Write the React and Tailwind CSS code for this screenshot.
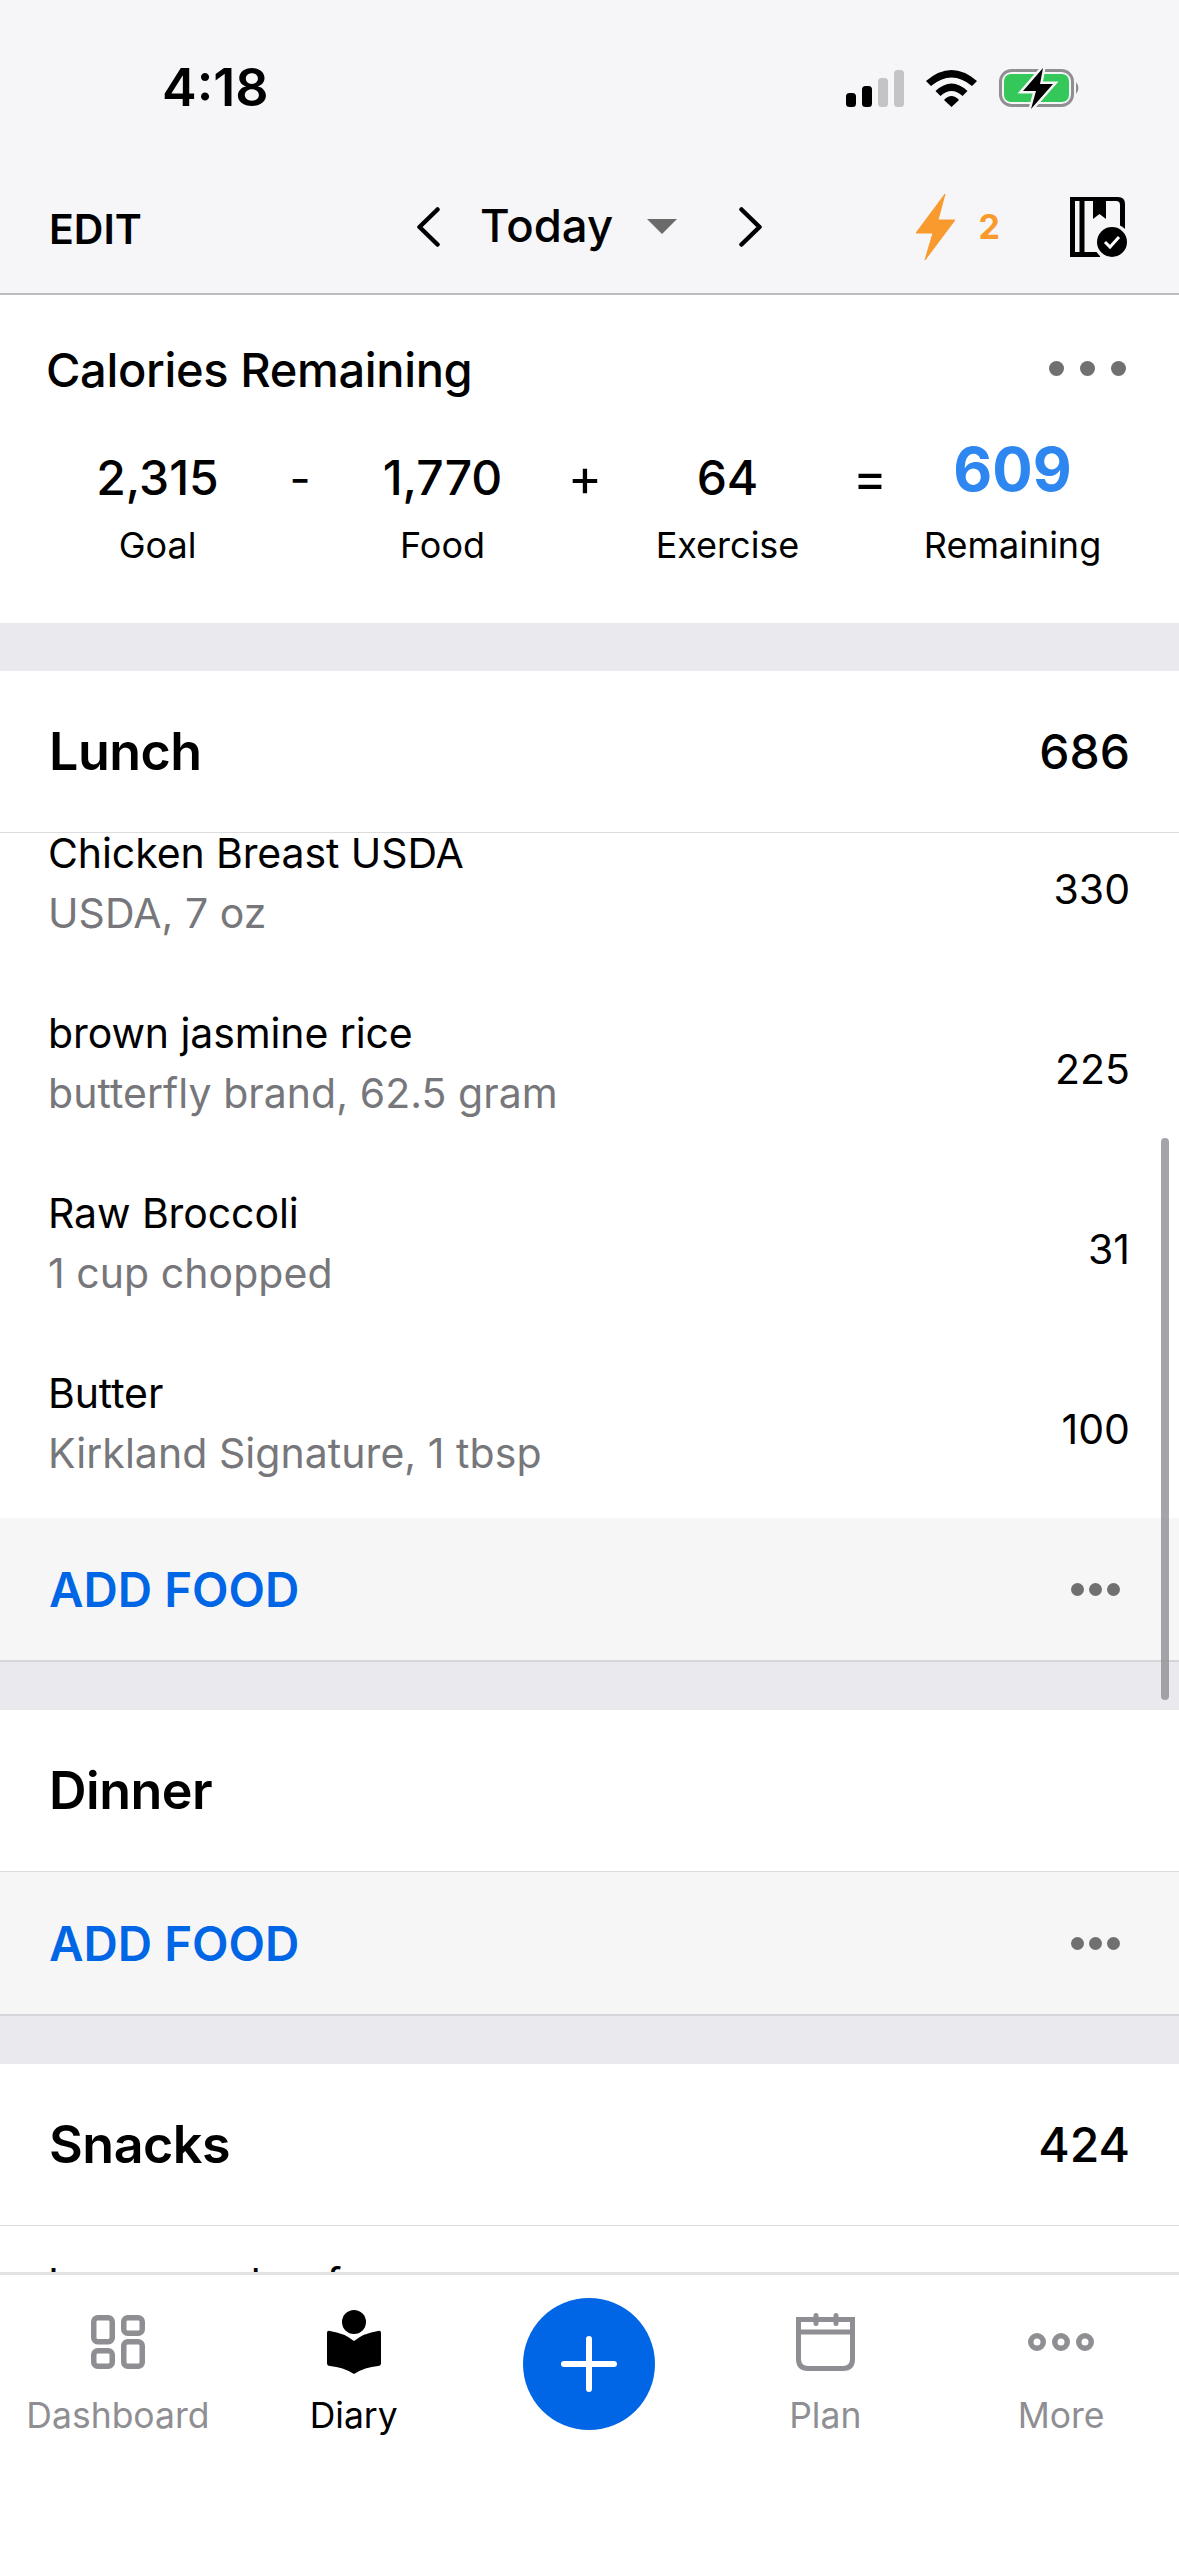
import React from "react";

const F = "font-['Inter','Liberation_Sans',sans-serif]";

function Dots({ big }) {
  return (
    <div className={big ? "flex gap-[16px] -mt-[4px]" : "flex gap-[5px]"}>
      {[0, 1, 2].map((i) => (
        <span key={i} className={big ? "w-[15px] h-[15px] rounded-full bg-[#707070]" : "w-[13px] h-[13px] rounded-full bg-[#707070]"} />
      ))}
    </div>
  );
}

function SectionHeader({ title, cals }) {
  return (
    <div className="h-[162px] bg-white border-b border-[#dcdcdf] px-[49px] flex items-center justify-between">
      <span className="text-[52px] font-semibold text-black tracking-[-0.5px]">{title}</span>
      {cals && <span className="text-[48px] font-medium text-black">{cals}</span>}
    </div>
  );
}

function FoodRow({ name, sub, cals }) {
  return (
    <div className="h-[180px] shrink-0 pl-[48px] pr-[49px] flex items-center justify-between">
      <div className="flex flex-col gap-[12px] pb-[10px]">
        <span className="text-[41px] leading-[48px] text-black tracking-[-0.1px]">{name}</span>
        <span className="text-[41px] leading-[48px] text-[#77777b] tracking-[0.05px]">{sub}</span>
      </div>
      <span className="pt-[3px] text-[41px] text-black">{cals}</span>
    </div>
  );
}

function AddFood() {
  return (
    <div className="h-[144px] bg-[#f6f6f7] border-b-2 border-[#d6d6da] pl-[49px] pr-[59px] flex items-center justify-between">
      <span className="pt-[2px] text-[47.5px] font-semibold text-[#0066e6]">ADD FOOD</span>
      <Dots />
    </div>
  );
}

function Gap() {
  return <div className="h-[48px] bg-[#e9e9ee]" />;
}

function Stat({ value, label, blue }) {
  return (
    <div className="w-[285px] flex flex-col items-center">
      <span className={blue ? "h-[70px] leading-[52px] text-[60px] font-bold text-[#2e86f0]" : "h-[70px] leading-[70px] text-[48px] font-medium text-black"}>{value}</span>
      <span className="mt-[10px] text-[36px] leading-[44px] text-black">{label}</span>
    </div>
  );
}

function Op({ c, big }) {
  return (
    <div className="w-0 flex justify-center overflow-visible">
      <span className={big ? "text-[52px] leading-[70px] text-black" : "text-[46px] leading-[70px] text-black"}>{c}</span>
    </div>
  );
}

function Tab({ label, active, children }) {
  return (
    <div className="flex flex-col items-center">
      <div className="h-[80px] flex items-center justify-center">{children}</div>
      <span className={active ? "mt-[12px] text-[35.5px] leading-[44px] text-black" : "mt-[12px] text-[35.5px] leading-[44px] text-[#8e8e93]"}>{label}</span>
    </div>
  );
}

export default function App() {
  return (
    <div className={`${F} relative w-[1179px] h-[2556px] overflow-hidden bg-white flex flex-col`}>
      {/* Top chrome */}
      <div className="h-[295px] shrink-0 bg-[#f6f6f9] border-b-2 border-[#bdbdbf] flex flex-col">
        <div className="h-[176px] shrink-0 pl-[162px] pr-[98px] pt-[55px] flex justify-between">
          <span className="text-[52px] leading-[66px] font-semibold text-black">4:18</span>
          <div className="flex items-center gap-[22px] h-[66px]">
            <svg width="58" height="37" viewBox="0 0 58 37">
              <rect x="0" y="23" width="10" height="14" rx="3.5" fill="#000" />
              <rect x="16" y="16" width="10" height="21" rx="3.5" fill="#000" />
              <rect x="32" y="8" width="10" height="29" rx="3.5" fill="#c4c4c7" />
              <rect x="48" y="0" width="10" height="37" rx="3.5" fill="#c4c4c7" />
            </svg>
            <svg width="51" height="37" viewBox="0 0 51 37">
              <path d="M0 11 Q25.5 -11 51 11 L46 16 Q25.5 -1 5 16 Z" fill="#000" />
              <path d="M9.5 21 Q25.5 6 41.5 21 L36.5 26 Q25.5 16 14.5 26 Z" fill="#000" />
              <path d="M18 30 Q25.5 22 33 30 L25.5 37 Z" fill="#000" />
            </svg>
            <svg width="82" height="41" viewBox="0 0 82 41">
              <rect x="1.5" y="2.5" width="72" height="35" rx="11" fill="none" stroke="#8f8f93" strokeWidth="3" />
              <rect x="5" y="6" width="65" height="28" rx="7" fill="#34c759" />
              <path d="M77 14 Q82 20 77 26 Z" fill="#8f8f93" />
              <path d="M44 0 L24 23 L37 23 L32 41 L54 16 L41 16 Z" fill="#000" stroke="#f6f6f9" strokeWidth="5" paintOrder="stroke" />
            </svg>
          </div>
        </div>
        <div className="flex-1 pl-[49px] pr-[52px] flex items-center pb-[16px]">
          <div className="w-[368px] shrink-0">
            <span className="block mt-[6px] text-[41px] font-semibold text-black">EDIT</span>
          </div>
          <div className="flex items-center">
            <svg width="23" height="40" viewBox="0 0 23 40" fill="none" stroke="#000" strokeWidth="4.5" strokeLinecap="round" strokeLinejoin="round">
              <path d="M20.5 2.5 L2.5 20 L20.5 37.5" />
            </svg>
            <span className="ml-[40px] w-[133px] text-[45.5px] font-medium text-black whitespace-nowrap">Today</span>
            <svg className="ml-[34px]" width="30" height="15" viewBox="0 0 30 15"><path d="M0 0 H30 L15 15 Z" fill="#6b6b6b" /></svg>
            <svg className="ml-[62px]" width="23" height="40" viewBox="0 0 23 40" fill="none" stroke="#000" strokeWidth="4.5" strokeLinecap="round" strokeLinejoin="round">
              <path d="M2.5 2.5 L20.5 20 L2.5 37.5" />
            </svg>
          </div>
          <div className="ml-auto flex items-center">
            <svg width="39" height="66" viewBox="0 0 39 66">
              <path d="M29 0 L0 39 L17 39 L9 66 L39 26 L22 26 Z" fill="#f89a2e" stroke="#f89a2e" strokeWidth="1" strokeLinejoin="round" />
            </svg>
            <span className="ml-[24px] text-[34px] font-bold text-[#f89a2e]">2</span>
            <svg className="ml-[70px]" width="57" height="60" viewBox="0 0 57 60">
              <path d="M0 0 H48 Q55 0 55 7 V40 H50 V8 Q50 4 46 4 H0 Z" fill="#000" />
              <rect x="0" y="0" width="5" height="60" fill="#000" />
              <rect x="9.5" y="0" width="5" height="60" fill="#000" />
              <rect x="0" y="55" width="30" height="5" fill="#000" />
              <path d="M23 4 V22 L29.5 17 L36 22 V4 Z" fill="#000" />
              <circle cx="42" cy="45" r="18.5" fill="#f6f6f9" />
              <circle cx="42" cy="45" r="15" fill="#000" />
              <path d="M35 45 L40 50 L49 40" fill="none" stroke="#fff" strokeWidth="3" />
            </svg>
          </div>
        </div>
      </div>

      {/* Calories card */}
      <div className="h-[328px] shrink-0 bg-white">
        <div className="pl-[46px] pr-[53px] pt-[45px] flex items-center justify-between">
          <span className="text-[47px] leading-[60px] font-medium text-black tracking-[-0.35px]">Calories Remaining</span>
          <Dots big />
        </div>
        <div className="mt-[43px] pl-[15px] flex items-start">
          <Stat value="2,315" label="Goal" />
          <Op c="-" />
          <Stat value="1,770" label="Food" />
          <Op c="+" big />
          <Stat value="64" label="Exercise" />
          <Op c="=" big />
          <Stat value="609" label="Remaining" blue />
        </div>
      </div>
      <Gap />

      <SectionHeader title="Lunch" cals="686" />
      <div className="h-[685px] shrink-0 overflow-hidden">
        <div className="-mt-[35px]">
          <FoodRow name="Chicken Breast USDA" sub="USDA, 7 oz" cals="330" />
          <FoodRow name="brown jasmine rice" sub="butterfly brand, 62.5 gram" cals="225" />
          <FoodRow name="Raw Broccoli" sub="1 cup chopped" cals="31" />
          <FoodRow name="Butter" sub="Kirkland Signature, 1 tbsp" cals="100" />
        </div>
      </div>
      <AddFood />
      <Gap />
      <SectionHeader title="Dinner" />
      <AddFood />
      <Gap />
      <SectionHeader title="Snacks" cals="424" />
      <div className="flex-1 min-h-0 overflow-hidden pl-[48px] pt-[33px]">
        <span className="text-[41px] leading-[48px] text-black whitespace-nowrap">Ice cream bar free</span>
      </div>

      {/* Tab bar */}
      <div className="h-[284px] shrink-0 bg-white border-t-[3px] border-[#e3e3e5] grid grid-cols-5 pt-[27px]">
        <Tab label="Dashboard">
          <svg width="54" height="54" viewBox="0 0 54 54" fill="none" stroke="#8e8e93" strokeWidth="5.5">
            <rect x="2.75" y="2.75" width="18.5" height="24" rx="4" />
            <rect x="32.75" y="2.75" width="18.5" height="15.5" rx="4" />
            <rect x="2.75" y="35.75" width="18.5" height="15.5" rx="4" />
            <rect x="32.75" y="26.75" width="18.5" height="24.5" rx="4" />
          </svg>
        </Tab>
        <Tab label="Diary" active>
          <svg width="54" height="64" viewBox="0 0 54 64">
            <circle cx="27" cy="12" r="12" fill="#000" />
            <path d="M0 23 Q0 20 3 21 Q17 23 27 31 Q37 23 51 21 Q54 20 54 23 V53 Q54 56 51 56 Q38 57 27 64 Q16 57 3 56 Q0 56 0 53 Z" fill="#000" />
          </svg>
        </Tab>
        <div className="flex justify-center">
          <div className="-mt-[4px] w-[132px] h-[132px] rounded-full bg-[#0066e6] flex items-center justify-center">
            <svg width="56" height="56" viewBox="0 0 56 56" stroke="#fff" strokeWidth="6" strokeLinecap="round">
              <path d="M28 3 V53 M3 28 H53" />
            </svg>
          </div>
        </div>
        <Tab label="Plan">
          <svg width="59" height="58" viewBox="0 0 59 58" fill="none" stroke="#8e8e93" strokeWidth="5">
            <path d="M2.5 6.5 H56.5 V46 Q56.5 55.5 47 55.5 H12 Q2.5 55.5 2.5 46 Z" />
            <path d="M2.5 19 H56.5" />
            <path d="M20 2.5 V10.5 M40 2.5 V10.5" strokeLinecap="round" />
          </svg>
        </Tab>
        <Tab label="More">
          <svg width="66" height="18" viewBox="0 0 66 18" fill="none" stroke="#8e8e93" strokeWidth="5.5">
            <circle cx="9" cy="9" r="6.25" />
            <circle cx="33" cy="9" r="6.25" />
            <circle cx="57" cy="9" r="6.25" />
          </svg>
        </Tab>
      </div>

      {/* Scrollbar */}
      <div className="absolute left-[1161px] top-[1138px] w-[8px] h-[562px] rounded-full bg-[#8e8e93]/80" />
    </div>
  );
}
